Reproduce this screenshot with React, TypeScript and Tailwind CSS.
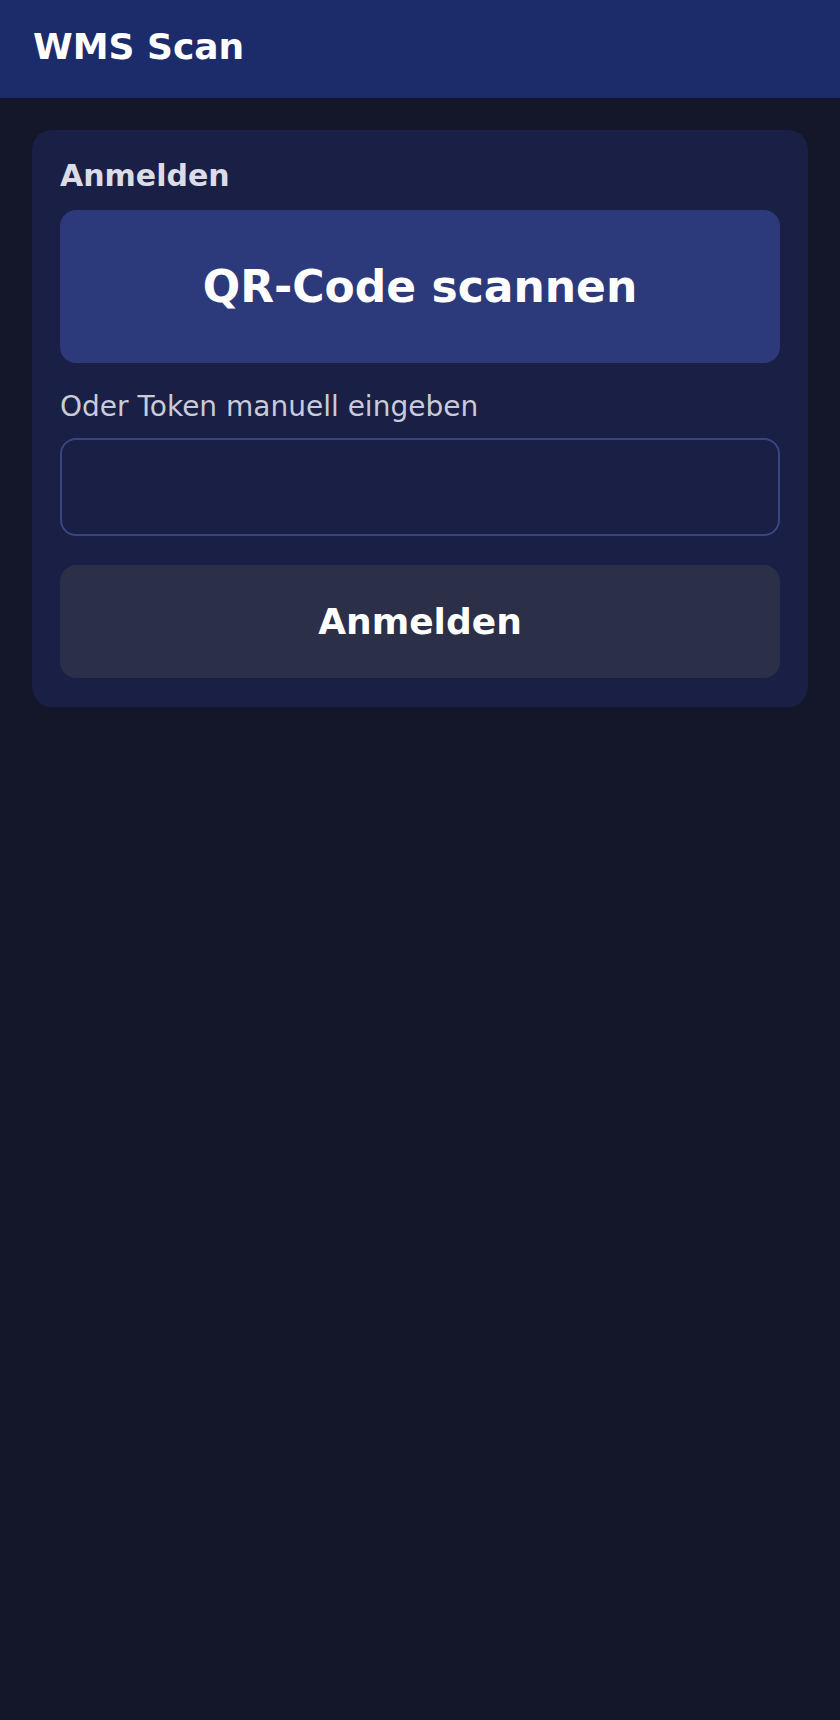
import React, { useState } from 'react';

const App: React.FC = () => {
  const [token, setToken] = useState<string>('');

  const handleLogin = (e: React.FormEvent) => {
    e.preventDefault();
  };

  return (
    <div className="min-h-[1720px] bg-[#131729] font-['DejaVu_Sans',sans-serif]">
      <header className="h-[98px] bg-[#1c2b6a] flex items-center px-[33px] pb-[4px]">
        <h1 className="text-[36px] leading-[44px] font-bold text-white">WMS Scan</h1>
      </header>

      <main className="px-[32px] pt-[32px]">
        <form
          onSubmit={handleLogin}
          className="bg-[#1a1f45] rounded-[20px] px-[28px] pt-[28px] pb-[29px] flex flex-col"
        >
          <h2 className="text-[30px] leading-[36px] font-bold text-[#dcdce6]">Anmelden</h2>

          <button
            type="button"
            className="mt-[16px] h-[153px] w-full rounded-[16px] bg-[#2c3a7c] text-white text-[44px] leading-[52px] font-bold flex items-center justify-center"
          >
            QR-Code scannen
          </button>

          <label htmlFor="token" className="mt-[28px] text-[28px] leading-[32px] text-[#c9cbd9]">
            Oder Token manuell eingeben
          </label>
          <input
            id="token"
            type="text"
            value={token}
            onChange={(e) => setToken(e.target.value)}
            className="mt-[15px] h-[98px] w-full rounded-[16px] border-2 border-[#38467f] bg-[#1a1f45] px-[20px] text-[26px] text-white outline-none"
          />

          <button
            type="submit"
            className="mt-[29px] h-[113px] w-full rounded-[16px] bg-[#2b2f47] text-white text-[36px] leading-[44px] font-bold flex items-center justify-center"
          >
            Anmelden
          </button>
        </form>
      </main>
    </div>
  );
};

export default App;
